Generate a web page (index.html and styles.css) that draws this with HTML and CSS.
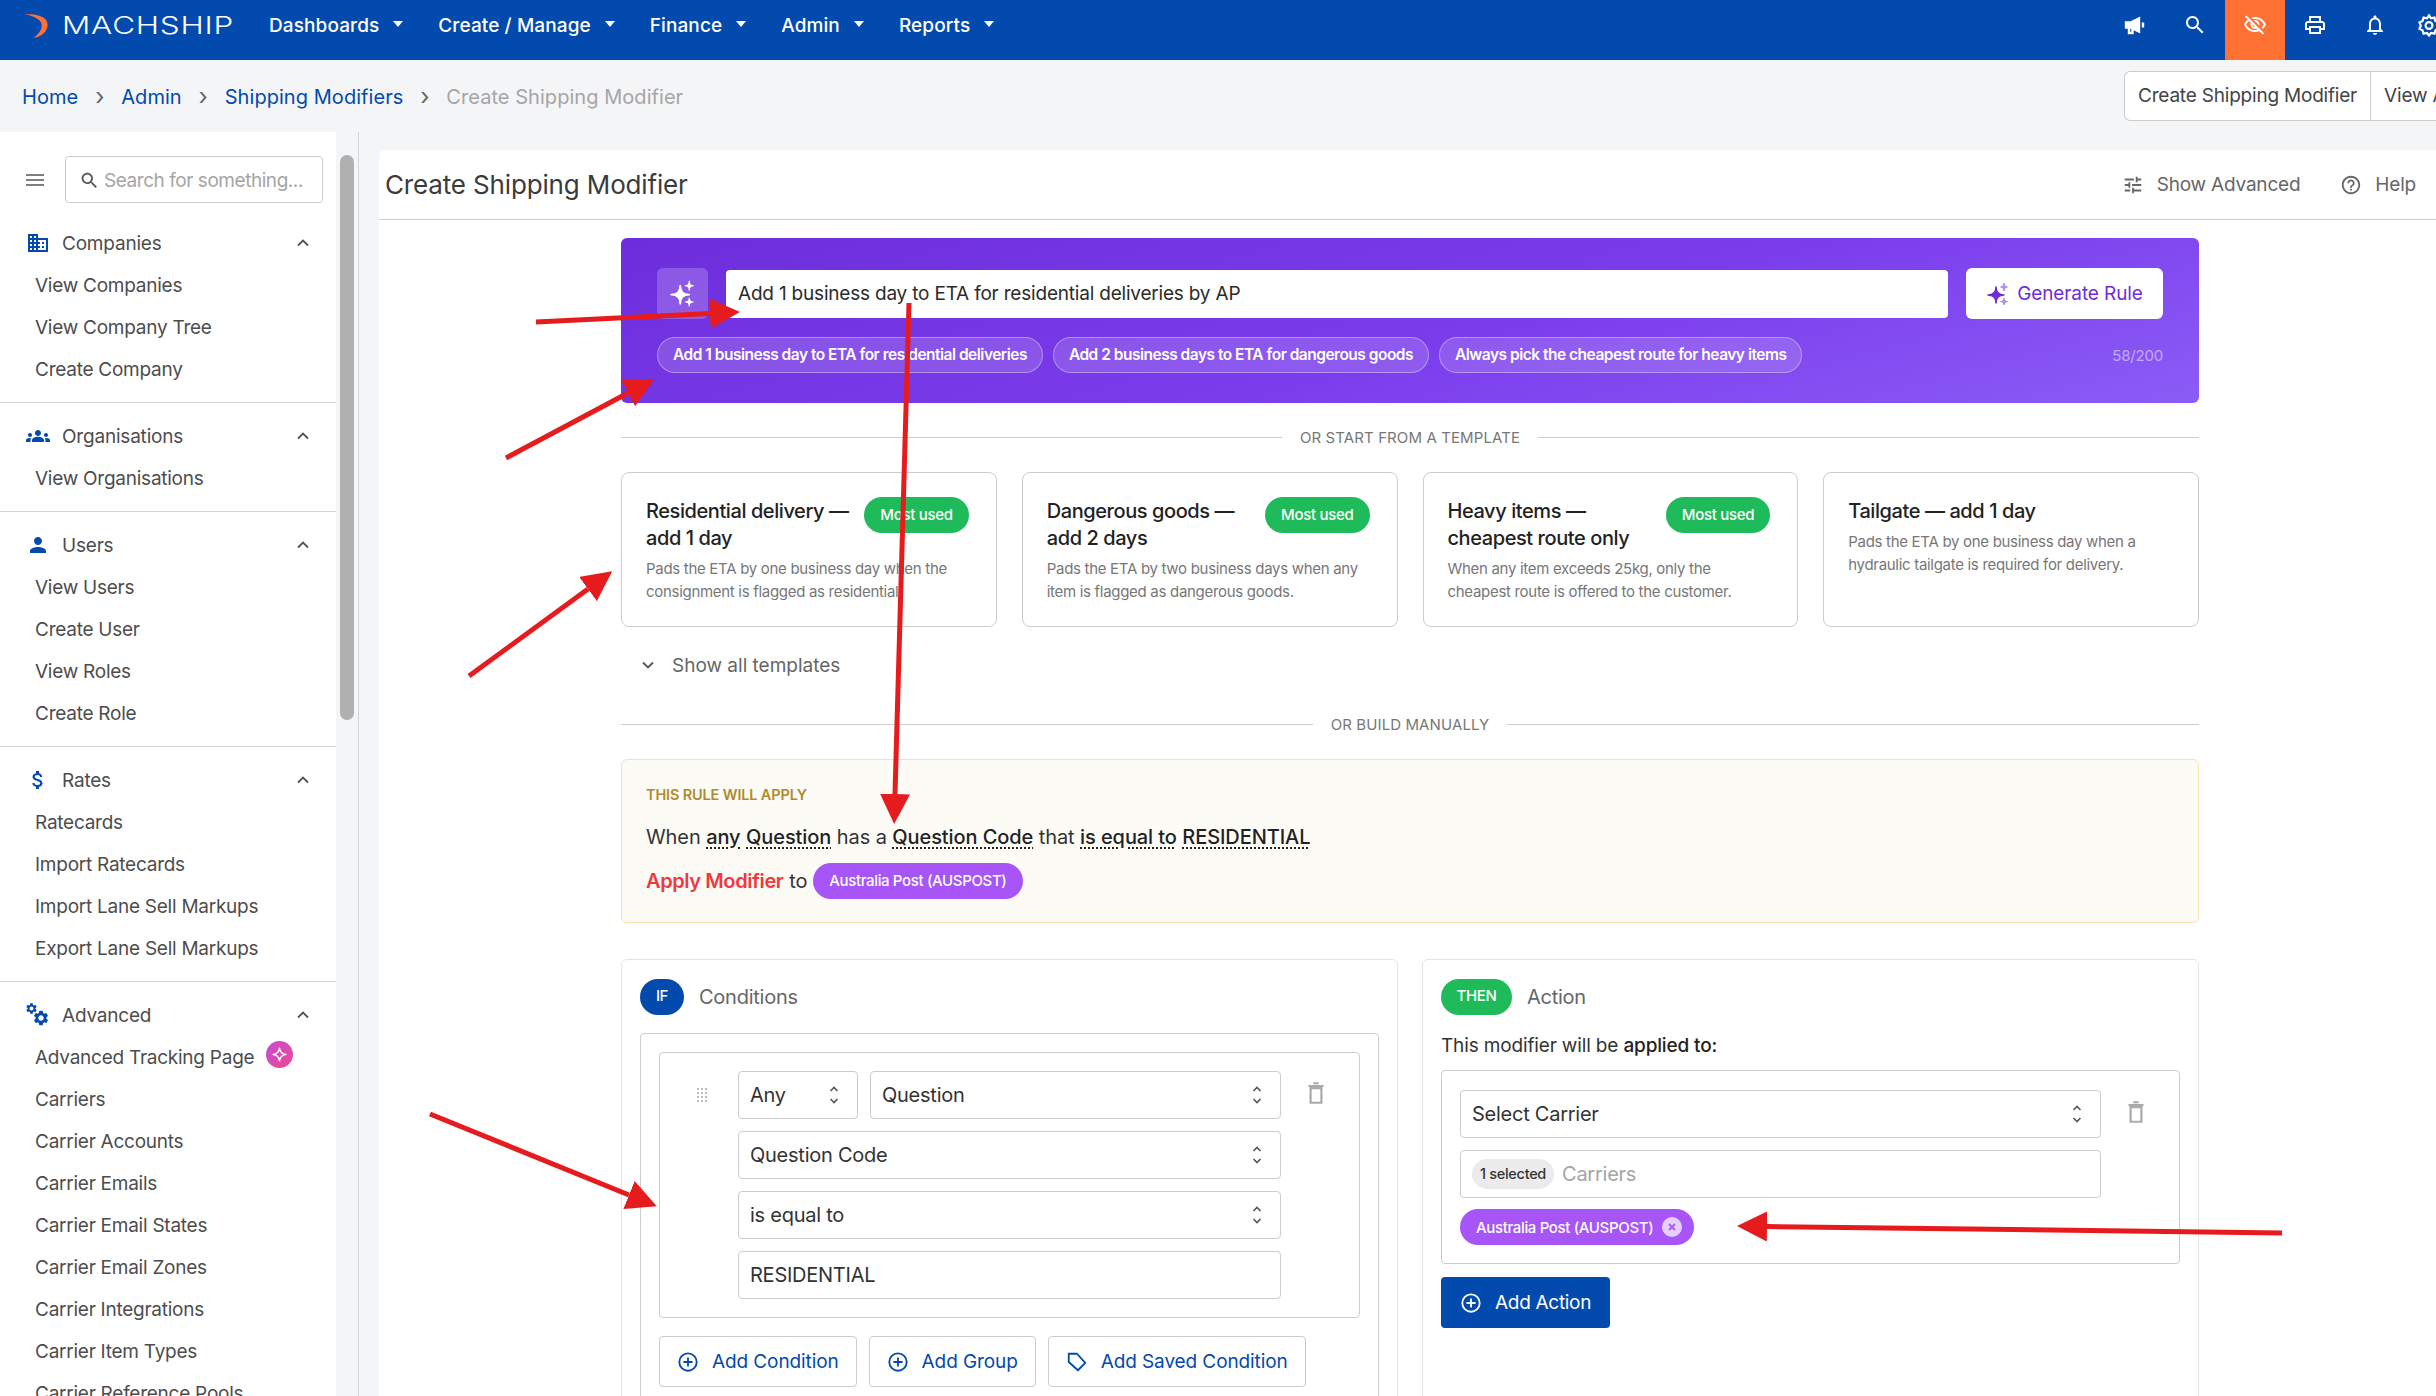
FILE: index.html
```html
<!DOCTYPE html>
<html>
<head>
    <title>Create Shipping Modifier</title>
    <link rel="stylesheet" href="styles.css">
</head>
<body>
    <svg class="sprite" xmlns="http://www.w3.org/2000/svg">
        <symbol id="i-search" viewBox="0 0 24 24"><path d="M15.5 14h-.79l-.28-.27C15.41 12.59 16 11.11 16 9.5 16 5.91 13.09 3 9.5 3S3 5.91 3 9.5 5.91 16 9.5 16c1.61 0 3.09-.59 4.23-1.57l.27.28v.79l5 4.99L20.49 19l-4.99-5zm-6 0C7.01 14 5 11.99 5 9.5S7.01 5 9.5 5 14 7.01 14 9.5 11.99 14 9.5 14z"/></symbol>
        <symbol id="i-gear" viewBox="0 0 24 24"><path d="M19.14 12.94c.04-.3.06-.61.06-.94 0-.32-.02-.64-.07-.94l2.03-1.58c.18-.14.23-.41.12-.61l-1.92-3.32c-.12-.22-.37-.29-.59-.22l-2.39.96c-.5-.38-1.03-.7-1.62-.94l-.36-2.54c-.04-.24-.24-.41-.48-.41h-3.84c-.24 0-.43.17-.47.41l-.36 2.54c-.59.24-1.13.57-1.62.94l-2.39-.96c-.22-.08-.47 0-.59.22L2.74 8.87c-.12.21-.08.47.12.61l2.03 1.58c-.05.3-.09.63-.09.94s.02.64.07.94l-2.03 1.58c-.18.14-.23.41-.12.61l1.92 3.32c.12.22.37.29.59.22l2.39-.96c.5.38 1.03.7 1.62.94l.36 2.54c.05.24.24.41.48.41h3.84c.24 0 .44-.17.47-.41l.36-2.54c.59-.24 1.13-.56 1.62-.94l2.39.96c.22.08.47 0 .59-.22l1.92-3.32c.12-.22.07-.47-.12-.61l-2.01-1.58zM12 15.6c-1.98 0-3.6-1.62-3.6-3.6s1.62-3.6 3.6-3.6 3.6 1.62 3.6 3.6-1.62 3.6-3.6 3.6z"/></symbol>
        <symbol id="i-spark" viewBox="0 0 24 24"><path d="M10 5Q10 13 18 13Q10 13 10 21Q10 13 2 13Q10 13 10 5z" stroke="currentColor" stroke-width="1.6" stroke-linejoin="round"/><path class="spark-small" d="M18 1Q18 5 21.500 5Q18 5 18 9Q18 5 14.500 5Q18 5 18 1z" stroke="currentColor" stroke-width="1" stroke-linejoin="round"/><path class="spark-small" d="M18 16Q18 19.500 21.500 19.500Q18 19.500 18 23Q18 19.500 14.500 19.500Q18 19.500 18 16z" stroke="currentColor" stroke-width="1" stroke-linejoin="round"/></symbol>
        <symbol id="i-updown" viewBox="0 0 12 24"><path d="M2.500 8L6 4.500L9.500 8M2.500 16L6 19.500L9.500 16" fill="none" stroke="currentColor" stroke-width="1.600"/></symbol>
        <symbol id="i-trash" viewBox="0 0 24 24"><path d="M7 7.500h10V21H7zM5 5.500h14M9.500 3h5" fill="none" stroke="currentColor" stroke-width="2"/></symbol>
        <symbol id="i-plus" viewBox="0 0 24 24"><circle cx="12" cy="12" r="9.500" fill="none" stroke="currentColor" stroke-width="2"/><path d="M12 7v10M7 12h10" fill="none" stroke="currentColor" stroke-width="2"/></symbol>
        <symbol id="i-chev" viewBox="0 0 24 24"><path d="M6 15l6-6l6 6" fill="none" stroke="currentColor" stroke-width="2.200"/></symbol>
    </svg>

    <header class="topbar">
        <a class="logo">
            <svg class="logo-mark" viewBox="0 0 32 26"><path d="M0 1C14 1 24 4 23 13C22 20 16 24 9 25C15 20 18 16 17 11C16 6 9 3 0 1z" fill="#ff7033"/></svg>
            <span>MACHSHIP</span>
        </a>
        <nav class="mainnav">
            <a>Dashboards</a>
            <a>Create / Manage</a>
            <a>Finance</a>
            <a>Admin</a>
            <a>Reports</a>
        </nav>
        <div class="top-icons">
            <span class="top-icon"><svg viewBox="0 0 24 24" fill="none" stroke="#fff" stroke-width="2.400"><path d="M3 9.500v5h4.500L16 18.500V5.500L7.500 9.500z" fill="#fff"/><path d="M6 14.500V20h3.500v-5M20 9.500v5"/></svg></span>
            <span class="top-icon"><svg viewBox="0 0 24 24" fill="#fff"><use href="#i-search"/></svg></span>
            <span class="top-icon is-active"><svg viewBox="0 0 24 24" fill="#fff"><path d="M12 6c3.790 0 7.170 2.130 8.820 5.500-.59 1.220-1.420 2.270-2.410 3.120l1.410 1.410c1.390-1.230 2.490-2.770 3.180-4.530C21.270 7.110 17 4 12 4c-1.270 0-2.490.2-3.640.57l1.650 1.650C10.660 6.090 11.320 6 12 6zm-1.070 1.140L13 9.210c.57.25 1.030.71 1.280 1.280l2.070 2.070c.08-.34.14-.7.14-1.070C16.500 9.010 14.480 7 12 7c-.37 0-.72.05-1.070.14zM2.010 3.870l2.680 2.680C3.060 7.830 1.770 9.530 1 11.500 2.730 15.890 7 19 12 19c1.520 0 2.980-.29 4.320-.82l3.420 3.420 1.410-1.410L3.420 2.450 2.010 3.870zm7.500 7.500l2.610 2.610c-.04.01-.08.02-.12.02-1.380 0-2.500-1.120-2.500-2.500 0-.05.01-.08.01-.13zm-3.400-3.400l1.750 1.750c-.23.55-.36 1.150-.36 1.780 0 2.480 2.020 4.500 4.500 4.500.63 0 1.230-.13 1.770-.36l.98.98c-.88.24-1.800.38-2.750.38-3.790 0-7.170-2.130-8.820-5.500.7-1.430 1.720-2.610 2.930-3.530z"/></svg></span>
            <span class="top-icon"><svg viewBox="0 0 24 24" fill="#fff"><path d="M19 8h-1V3H6v5H5c-1.660 0-3 1.340-3 3v6h4v4h12v-4h4v-6c0-1.660-1.340-3-3-3zM8 5h8v3H8V5zm8 12v2H8v-4h8v2zm2-2v-2H6v2H4v-4c0-.55.45-1 1-1h14c.55 0 1 .45 1 1v4h-2z"/></svg></span>
            <span class="top-icon"><svg viewBox="0 0 24 24" fill="#fff"><path d="M12 22c1.100 0 2-.9 2-2h-4c0 1.100.9 2 2 2zm6-6v-5c0-3.070-1.630-5.640-4.500-6.320V4c0-.83-.67-1.500-1.500-1.500s-1.500.67-1.500 1.500v.68C7.640 5.360 6 7.920 6 11v5l-2 2v1h16v-1l-2-2zm-2 1H8v-6c0-2.480 1.510-4.500 4-4.500s4 2.020 4 4.500v6z"/></svg></span>
            <span class="top-icon top-icon-last"><svg viewBox="0 0 24 24" fill="none" stroke="#fff" stroke-width="2.200"><path d="M12 2.500l2 2.800 3.400-.7 1 3.300 3.100 1.600-1.300 3.200 1.300 3-3.100 1.700-1 3.300-3.400-.7-2 2.500-2-2.500-3.400.7-1-3.300-3.100-1.700 1.300-3-1.300-3.200 3.100-1.600 1-3.300 3.400.7z"/><circle cx="12" cy="12.500" r="3.400"/></svg></span>
        </div>
    </header>

    <div class="crumbbar">
        <a class="crumb">Home</a><span class="crumb-sep">›</span>
        <a class="crumb">Admin</a><span class="crumb-sep">›</span>
        <a class="crumb">Shipping Modifiers</a><span class="crumb-sep">›</span>
        <span class="crumb crumb-current">Create Shipping Modifier</span>
        <div class="crumb-tabs">
            <a class="crumb-tab">Create Shipping Modifier</a>
            <a class="crumb-tab">View All Shipping Modifiers</a>
        </div>
    </div>

    <div class="layout">
        <aside class="sidebar">
            <div class="side-search">
                <svg class="hamburger" viewBox="0 0 18 12"><path d="M0 1h18M0 6h18M0 11h18" stroke="#555" stroke-width="1.600"/></svg>
                <div class="search-box">
                    <svg viewBox="0 0 24 24" fill="#555"><use href="#i-search"/></svg>
                    <span>Search for something...</span>
                </div>
            </div>

            <section class="side-group">
                <div class="side-head">
                    <svg class="side-icon" viewBox="0 0 24 24"><path d="M12 7V3H2v18h20V7H12zM6 19H4v-2h2v2zm0-4H4v-2h2v2zm0-4H4V9h2v2zm0-4H4V5h2v2zm4 12H8v-2h2v2zm0-4H8v-2h2v2zm0-4H8V9h2v2zm0-4H8V5h2v2zm10 12h-8v-2h2v-2h-2v-2h2v-2h-2V9h8v10zm-2-8h-2v2h2v-2zm0 4h-2v2h2v-2z"/></svg>
                    <span>Companies</span>
                    <svg class="side-chev" viewBox="0 0 24 24"><use href="#i-chev"/></svg>
                </div>
                <a class="side-link">View Companies</a>
                <a class="side-link">View Company Tree</a>
                <a class="side-link">Create Company</a>
            </section>

            <section class="side-group">
                <div class="side-head">
                    <svg class="side-icon" viewBox="0 0 24 24"><path d="M12 12.750c1.630 0 3.070.39 4.240.9 1.080.48 1.760 1.560 1.760 2.730V18H6v-1.610c0-1.180.68-2.260 1.760-2.730 1.170-.52 2.610-.91 4.240-.91zM4 13c1.100 0 2-.9 2-2s-.9-2-2-2-2 .9-2 2 .9 2 2 2zm1.130 1.100c-.37-.06-.74-.1-1.130-.1-.99 0-1.930.21-2.780.58C.48 14.900 0 15.620 0 16.430V18h4.500v-1.610c0-.83.23-1.610.63-2.290zM20 13c1.100 0 2-.9 2-2s-.9-2-2-2-2 .9-2 2 .9 2 2 2zm4 3.430c0-.81-.48-1.530-1.220-1.850-.85-.37-1.790-.58-2.780-.58-.39 0-.76.04-1.130.1.4.68.63 1.460.63 2.290V18H24v-1.570zM12 6c1.660 0 3 1.340 3 3s-1.340 3-3 3-3-1.340-3-3 1.340-3 3-3z"/></svg>
                    <span>Organisations</span>
                    <svg class="side-chev" viewBox="0 0 24 24"><use href="#i-chev"/></svg>
                </div>
                <a class="side-link">View Organisations</a>
            </section>

            <section class="side-group">
                <div class="side-head">
                    <svg class="side-icon" viewBox="0 0 24 24"><path d="M12 12c2.210 0 4-1.790 4-4s-1.790-4-4-4-4 1.790-4 4 1.790 4 4 4zm0 2c-2.670 0-8 1.340-8 4v2h16v-2c0-2.660-5.330-4-8-4z"/></svg>
                    <span>Users</span>
                    <svg class="side-chev" viewBox="0 0 24 24"><use href="#i-chev"/></svg>
                </div>
                <a class="side-link">View Users</a>
                <a class="side-link">Create User</a>
                <a class="side-link">View Roles</a>
                <a class="side-link">Create Role</a>
            </section>

            <section class="side-group">
                <div class="side-head">
                    <svg class="side-icon" viewBox="0 0 24 24"><path d="M11.800 10.900c-2.270-.59-3-1.200-3-2.150 0-1.090 1.010-1.850 2.700-1.850 1.780 0 2.440.85 2.500 2.100h2.210c-.07-1.720-1.120-3.300-3.210-3.810V3h-3v2.160c-1.940.42-3.500 1.680-3.500 3.610 0 2.310 1.910 3.460 4.700 4.130 2.500.6 3 1.480 3 2.410 0 .69-.49 1.790-2.700 1.790-2.060 0-2.870-.92-2.980-2.100h-2.200c.12 2.190 1.760 3.420 3.680 3.830V21h3v-2.150c1.950-.37 3.500-1.500 3.500-3.550 0-2.840-2.430-3.810-4.700-4.400z"/></svg>
                    <span>Rates</span>
                    <svg class="side-chev" viewBox="0 0 24 24"><use href="#i-chev"/></svg>
                </div>
                <a class="side-link">Ratecards</a>
                <a class="side-link">Import Ratecards</a>
                <a class="side-link">Import Lane Sell Markups</a>
                <a class="side-link">Export Lane Sell Markups</a>
            </section>

            <section class="side-group">
                <div class="side-head">
                    <svg class="side-icon" viewBox="0 0 24 24"><use href="#i-gear" x="-1" y="-1" width="13" height="13"/><use href="#i-gear" x="6" y="6" width="18" height="18"/></svg>
                    <span>Advanced</span>
                    <svg class="side-chev" viewBox="0 0 24 24"><use href="#i-chev"/></svg>
                </div>
                <a class="side-link">Advanced Tracking Page <i class="new-dot"><svg viewBox="0 0 24 24"><path d="M12 3Q13 11 21 12Q13 13 12 21Q11 13 3 12Q11 11 12 3z" fill="none" stroke="#fff" stroke-width="2" stroke-linejoin="round"/></svg></i></a>
                <a class="side-link">Carriers</a>
                <a class="side-link">Carrier Accounts</a>
                <a class="side-link">Carrier Emails</a>
                <a class="side-link">Carrier Email States</a>
                <a class="side-link">Carrier Email Zones</a>
                <a class="side-link">Carrier Integrations</a>
                <a class="side-link">Carrier Item Types</a>
                <a class="side-link">Carrier Reference Pools</a>
            </section>
        </aside>

        <div class="gutter"><div class="scroll-thumb"></div></div>

        <main class="content">
            <div class="page-head">
                <h1>Create Shipping Modifier</h1>
                <div class="page-actions">
                    <a class="page-action"><svg viewBox="0 0 24 24" fill="#666"><path d="M3 17v2h6v-2H3zM3 5v2h10V5H3zm10 16v-2h8v-2h-8v-2h-2v6h2zM7 9v2H3v2h4v2h2V9H7zm14 4v-2H11v2h10zm-6-4h2V7h4V5h-4V3h-2v6z"/></svg>Show Advanced</a>
                    <a class="page-action"><svg viewBox="0 0 24 24" fill="#666"><path d="M11 18h2v-2h-2v2zm1-16C6.480 2 2 6.480 2 12s4.480 10 10 10 10-4.480 10-10S17.520 2 12 2zm0 18c-4.410 0-8-3.590-8-8s3.590-8 8-8 8 3.590 8 8-3.590 8-8 8zm0-14c-2.210 0-4 1.790-4 4h2c0-1.100.9-2 2-2s2 .9 2 2c0 2-3 1.750-3 5h2c0-2.250 3-2.500 3-5 0-2.210-1.790-4-4-4z"/></svg>Help</a>
                </div>
            </div>

            <div class="page-body">
                <section class="ai-panel">
                    <div class="ai-row">
                        <span class="ai-icon"><svg viewBox="0 0 24 24" fill="#fff" color="#fff"><use href="#i-spark"/></svg></span>
                        <div class="ai-input">Add 1 business day to ETA for residential deliveries by AP</div>
                        <button class="ai-generate"><svg viewBox="0 0 24 24" fill="#6d2ddb" color="#6d2ddb"><use href="#i-spark"/></svg>Generate Rule</button>
                    </div>
                    <div class="ai-chips">
                        <span class="ai-chip">Add 1 business day to ETA for residential deliveries</span>
                        <span class="ai-chip">Add 2 business days to ETA for dangerous goods</span>
                        <span class="ai-chip">Always pick the cheapest route for heavy items</span>
                        <span class="ai-count">58/200</span>
                    </div>
                </section>

                <div class="divider divider-template"><span>OR START FROM A TEMPLATE</span></div>

                <div class="templates">
                    <article class="tpl">
                        <div class="tpl-head">
                            <h3>Residential delivery —<br>add 1 day</h3>
                            <span class="tpl-badge">Most used</span>
                        </div>
                        <p>Pads the ETA by one business day when the consignment is flagged as residential.</p>
                    </article>
                    <article class="tpl">
                        <div class="tpl-head">
                            <h3>Dangerous goods —<br>add 2 days</h3>
                            <span class="tpl-badge">Most used</span>
                        </div>
                        <p>Pads the ETA by two business days when any item is flagged as dangerous goods.</p>
                    </article>
                    <article class="tpl">
                        <div class="tpl-head">
                            <h3>Heavy items —<br>cheapest route only</h3>
                            <span class="tpl-badge">Most used</span>
                        </div>
                        <p>When any item exceeds 25kg, only the cheapest route is offered to the customer.</p>
                    </article>
                    <article class="tpl">
                        <div class="tpl-head">
                            <h3>Tailgate — add 1 day</h3>
                        </div>
                        <p>Pads the ETA by one business day when a hydraulic tailgate is required for delivery.</p>
                    </article>
                </div>

                <a class="show-all"><svg viewBox="0 0 24 24"><path d="M6 9l6 6l6-6" fill="none" stroke="#555" stroke-width="2.200"/></svg>Show all templates</a>

                <div class="divider divider-manual"><span>OR BUILD MANUALLY</span></div>

                <section class="rule-box">
                    <div class="rule-label">THIS RULE WILL APPLY</div>
                    <p class="rule-line">When <b>any</b> <b>Question</b> has a <b>Question Code</b> that <b>is equal to</b> <b>RESIDENTIAL</b></p>
                    <p class="rule-line rule-apply"><strong>Apply Modifier</strong> to <span class="pill">Australia Post (AUSPOST)</span></p>
                </section>

                <div class="builder">
                    <section class="panel">
                        <div class="panel-head"><span class="tag tag-if">IF</span>Conditions</div>
                        <div class="outer-box">
                            <div class="cond-box">
                                <span class="drag"></span>
                                <div class="cond-fields">
                                    <div class="cond-row">
                                        <div class="field field-any">Any<svg viewBox="0 0 12 24"><use href="#i-updown"/></svg></div>
                                        <div class="field field-grow">Question<svg viewBox="0 0 12 24"><use href="#i-updown"/></svg></div>
                                    </div>
                                    <div class="field">Question Code<svg viewBox="0 0 12 24"><use href="#i-updown"/></svg></div>
                                    <div class="field">is equal to<svg viewBox="0 0 12 24"><use href="#i-updown"/></svg></div>
                                    <div class="field">RESIDENTIAL</div>
                                </div>
                                <svg class="trash" viewBox="0 0 24 24"><use href="#i-trash"/></svg>
                            </div>
                            <div class="cond-actions">
                                <a class="btn-line"><svg viewBox="0 0 24 24"><use href="#i-plus"/></svg>Add Condition</a>
                                <a class="btn-line"><svg viewBox="0 0 24 24"><use href="#i-plus"/></svg>Add Group</a>
                                <a class="btn-line"><svg viewBox="0 0 24 24"><path d="M3 3h9l9 10l-8 8L3 12z M7 6.500v.1" fill="none" stroke="currentColor" stroke-width="2" stroke-linejoin="round"/></svg>Add Saved Condition</a>
                            </div>
                        </div>
                    </section>

                    <section class="panel">
                        <div class="panel-head"><span class="tag tag-then">THEN</span>Action</div>
                        <p class="applied">This modifier will be <b>applied to:</b></p>
                        <div class="action-box">
                            <div class="action-fields">
                                <div class="field">Select Carrier<svg viewBox="0 0 12 24"><use href="#i-updown"/></svg></div>
                                <div class="field field-multi"><span class="count-chip">1 selected</span><span class="placeholder">Carriers</span></div>
                                <span class="pill pill-x">Australia Post (AUSPOST)<i class="pill-close"><svg viewBox="0 0 12 12"><path d="M3 3l6 6M9 3l-6 6" stroke="#a855f7" stroke-width="1.800"/></svg></i></span>
                            </div>
                            <svg class="trash" viewBox="0 0 24 24"><use href="#i-trash"/></svg>
                        </div>
                        <a class="btn-solid"><svg viewBox="0 0 24 24"><use href="#i-plus"/></svg>Add Action</a>
                    </section>
                </div>
            </div>
        </main>
    </div>

    <svg class="annotations" viewBox="0 0 2436 1396" xmlns="http://www.w3.org/2000/svg">
        <defs>
            <marker id="arrowhead" markerUnits="userSpaceOnUse" markerWidth="30" markerHeight="30" refX="0" refY="15" orient="auto"><path d="M0 0L30 15L0 30z" fill="#e61b1e"/></marker>
        </defs>
        <line x1="536" y1="322" x2="710" y2="313.500" marker-end="url(#arrowhead)"/>
        <line x1="506" y1="458" x2="628" y2="393" marker-end="url(#arrowhead)"/>
        <line x1="469" y1="676" x2="588" y2="589" marker-end="url(#arrowhead)"/>
        <line x1="909" y1="303" x2="895" y2="794" marker-end="url(#arrowhead)"/>
        <line x1="430" y1="1114" x2="629" y2="1195" marker-end="url(#arrowhead)"/>
        <line x1="2282" y1="1233" x2="1767" y2="1226.500" marker-end="url(#arrowhead)"/>
    </svg>
</body>
</html>
```

FILE: styles.css
```css
* {
    box-sizing: border-box;
}
html, body {
    margin: 0;
    height: 1396px;
    overflow: hidden;
}
body {
    position: relative;
    font-family: Inter, "Noto Sans", sans-serif;
    font-size: 19px;
    color: #333;
    background: #f4f5f7;
}
h1, h3, p {
    margin: 0;
    font-weight: inherit;
}
.sprite {
    display: none;
}
.spark-small {
    opacity: var(--small, 1);
}

/* top bar */
.topbar {
    display: flex;
    align-items: center;
    height: 60px;
    background: #024aad;
    color: #fff;
}
.logo {
    display: flex;
    align-items: center;
    width: 269px;
    height: 100%;
    padding: 0 0 9px 24px;
    flex: none;
}
.logo-mark {
    width: 33px;
    height: 26px;
    margin-right: 5px;
}
.logo span {
    font-size: 24px;
    font-weight: 300;
    letter-spacing: .6px;
    transform: scaleX(1.31);
    transform-origin: left center;
}
.mainnav {
    display: flex;
    padding-bottom: 10px;
}
.mainnav a {
    display: flex;
    align-items: center;
    font-size: 19px;
    font-weight: 500;
    letter-spacing: .1px;
    margin-right: 59px;
    position: relative;
}
.mainnav a::after {
    content: "";
    position: absolute;
    right: -24px;
    top: 7px;
    border-left: 5px solid transparent;
    border-right: 5px solid transparent;
    border-top: 6px solid #fff;
}
.top-icons {
    display: flex;
    margin-left: auto;
    height: 100%;
}
.top-icon {
    width: 60px;
    display: flex;
    align-items: center;
    justify-content: center;
    padding-bottom: 10px;
}
.top-icon svg {
    width: 24px;
    height: 24px;
    flex: none;
}
.top-icon.is-active {
    background: #ff7033;
}
.top-icon-last {
    width: 31px;
    justify-content: flex-start;
    padding-left: 12px;
    overflow: hidden;
}

/* breadcrumb */
.crumbbar {
    display: flex;
    align-items: center;
    height: 72px;
    padding: 1px 0 0 22px;
    overflow: hidden;
}
.crumb {
    font-size: 20px;
    color: #024aad;
    letter-spacing: .05px;
}
.crumb-current {
    color: #a5a5a5;
}
.crumb-sep {
    width: 43px;
    text-align: center;
    color: #666;
    font-size: 24px;
    line-height: 20px;
}
.crumb-tabs {
    display: flex;
    flex: none;
    margin: -1px 0 0 auto;
    width: 312px;
    height: 50px;
    background: #fff;
    border: 1px solid #ccc;
    border-right: 0;
    border-radius: 6px 0 0 6px;
    overflow: hidden;
}
.crumb-tab {
    flex: none;
    padding: 0 13px;
    line-height: 48px;
    font-size: 19px;
    letter-spacing: -.2px;
    color: #444;
    white-space: nowrap;
    border-right: 1px solid #ccc;
}

/* layout */
.layout {
    display: flex;
    height: 1264px;
}
.sidebar {
    width: 336px;
    flex: none;
    background: #fff;
    overflow: hidden;
}
.side-search {
    display: flex;
    align-items: center;
    height: 47px;
    margin-top: 24px;
    padding-left: 26px;
    margin-bottom: 19px;
}
.hamburger {
    width: 18px;
    height: 12px;
    margin-right: 21px;
}
.search-box {
    display: flex;
    align-items: center;
    width: 258px;
    height: 47px;
    padding: 2px 0 0 13px;
    border: 1px solid #ccc;
    border-radius: 4px;
    font-size: 19px;
    letter-spacing: -.45px;
    color: #a5a5a5;
    white-space: nowrap;
}
.search-box svg {
    width: 21px;
    height: 21px;
    margin-right: 4px;
    flex: none;
}
.side-group {
    padding-bottom: 12px;
    margin-bottom: 12px;
    border-bottom: 1px solid #d5d5d5;
}
.side-group:last-child {
    border-bottom: 0;
}
.side-head {
    display: flex;
    align-items: center;
    height: 42px;
    padding-left: 26px;
    color: #4d4d4d;
}
.side-head span {
    font-size: 19px;
    letter-spacing: -.2px;
}
.side-icon {
    width: 24px;
    height: 24px;
    fill: #024aad;
    margin-right: 12px;
    flex: none;
}
.side-chev {
    width: 20px;
    height: 20px;
    fill: none;
    color: #555;
    margin-left: auto;
    margin-right: 23px;
}
.side-link {
    display: flex;
    align-items: center;
    height: 42px;
    padding-left: 35px;
    font-size: 19px;
    letter-spacing: -.25px;
    color: #4d4d4d;
    white-space: nowrap;
}
.new-dot {
    display: flex;
    align-items: center;
    justify-content: center;
    width: 27px;
    height: 27px;
    margin: -6px 0 0 12px;
    border-radius: 50%;
    background: linear-gradient(135deg, #c64dd8, #f0468f);
}
.new-dot svg {
    width: 17px;
    height: 17px;
}
.gutter {
    width: 23px;
    flex: none;
    padding: 23px 0 0 4px;
    border-right: 1px solid #d5d5d5;
}
.scroll-thumb {
    width: 14px;
    height: 565px;
    border-radius: 7px;
    background: #b0b0b0;
}

/* page */
.content {
    flex: 1;
    margin: 18px 0 0 20px;
    background: #fff;
    border-radius: 6px 0 0 0;
    min-width: 0;
}
.page-head {
    display: flex;
    align-items: center;
    height: 70px;
    padding: 0 20px 0 6px;
    border-bottom: 1px solid #ccc;
}
.page-head h1 {
    font-size: 26px;
    font-weight: 400;
    letter-spacing: -.15px;
    color: #3b3b3b;
}
.page-actions {
    display: flex;
    margin-left: auto;
    gap: 40px;
}
.page-action {
    display: flex;
    align-items: center;
    font-size: 19px;
    letter-spacing: -.2px;
    color: #666;
}
.page-action svg {
    width: 22px;
    height: 22px;
    margin-right: 13px;
}
.page-body {
    width: 1578px;
    margin-left: 242px;
    padding-top: 18px;
}

/* ai prompt */
.ai-panel {
    height: 165px;
    padding: 30px 36px 0;
    border-radius: 6px;
    color: #fff;
    background: linear-gradient(165deg, #6d2ddb 0%, #7b3dec 55%, #8b5cf6 100%);
}
.ai-row {
    display: flex;
    align-items: center;
}
.ai-icon {
    display: flex;
    align-items: center;
    justify-content: center;
    flex: none;
    width: 51px;
    height: 51px;
    border-radius: 6px;
    background: rgba(255,255,255,.2);
}
.ai-icon svg {
    width: 27px;
    height: 27px;
}
.ai-input {
    flex: 1;
    height: 48px;
    margin: 0 18px 0 18px;
    padding-left: 12px;
    line-height: 48px;
    font-size: 19px;
    letter-spacing: -.2px;
    color: #2b2b2b;
    background: #fff;
    border-radius: 4px;
}
.ai-generate {
    --small: .55;
    display: flex;
    align-items: center;
    justify-content: center;
    flex: none;
    width: 197px;
    height: 51px;
    border: 0;
    border-radius: 6px;
    background: #fff;
    font: inherit;
    font-size: 19px;
    letter-spacing: -.1px;
    color: #6d2ddb;
}
.ai-generate svg {
    width: 24px;
    height: 24px;
    margin-right: 7px;
}
.ai-chips {
    display: flex;
    align-items: center;
    gap: 10px;
    margin-top: 18px;
}
.ai-chip {
    height: 36px;
    padding: 0 15px;
    line-height: 34px;
    font-size: 15.500px;
    font-weight: 600;
    letter-spacing: -.5px;
    white-space: nowrap;
    border: 1px solid rgba(255,255,255,.35);
    border-radius: 18px;
    background: rgba(255,255,255,.15);
}
.ai-count {
    margin-left: auto;
    font-size: 15px;
    letter-spacing: -.2px;
    color: rgba(255,255,255,.5);
}

/* dividers */
.divider {
    display: flex;
    align-items: center;
    gap: 18px;
    font-size: 15px;
    letter-spacing: .1px;
    color: #777;
    white-space: nowrap;
}
.divider::before, .divider::after {
    content: "";
    flex: 1;
    height: 1px;
    background: #ccc;
}
.divider-template {
    height: 20px;
    margin: 24px 0 25px;
}
.divider-manual {
    height: 20px;
    margin: 37px 0 25px;
}

/* templates */
.templates {
    display: grid;
    grid-template-columns: repeat(4, 1fr);
    gap: 25px;
}
.tpl {
    height: 155px;
    padding: 25px 24px 0;
    border: 1px solid #ccc;
    border-radius: 8px;
}
.tpl-head {
    display: flex;
    justify-content: space-between;
    align-items: flex-start;
    margin-bottom: 5px;
}
.tpl-badge {
    margin-top: -1px;
}
.tpl h3 {
    font-size: 20px;
    font-weight: 500;
    line-height: 27px;
    letter-spacing: -.42px;
    color: #222;
}
.tpl p {
    font-size: 15px;
    line-height: 23px;
    letter-spacing: -.3px;
    color: #777;
}
.tpl-badge {
    flex: none;
    height: 36px;
    margin-right: 3px;
    padding: 0 16px;
    line-height: 36px;
    font-size: 15px;
    font-weight: 500;
    letter-spacing: -.3px;
    color: #fff;
    border-radius: 18px;
    background: #1fbb5a;
}
.show-all {
    display: flex;
    align-items: center;
    height: 24px;
    margin: 26px 0 0 17px;
    font-size: 19px;
    letter-spacing: 0;
    color: #666;
}
.show-all svg {
    width: 20px;
    height: 20px;
    margin-right: 14px;
}

/* rule summary */
.rule-box {
    height: 164px;
    padding: 26px 24px 0;
    border: 1px solid #f8e2ad;
    border-radius: 6px;
    background: #fdfbf6;
}
.rule-label {
    font-size: 14.500px;
    font-weight: 600;
    letter-spacing: -.15px;
    color: #b08a2e;
}
.rule-line {
    margin-top: 20px;
    font-size: 20px;
    line-height: 28px;
    letter-spacing: -.09px;
    color: #333;
}
.rule-line b {
    font-weight: 500;
    color: #222;
    text-decoration: underline dotted #222;
    text-underline-offset: 3px;
}
.rule-apply {
    display: flex;
    align-items: center;
    gap: 6px;
    margin-top: 11px;
    height: 37px;
    letter-spacing: -.25px;
}
.rule-apply strong {
    font-weight: 600;
    letter-spacing: -.4px;
    color: #f0383e;
}
.pill {
    display: inline-flex;
    align-items: center;
    height: 36px;
    padding: 0 16px;
    font-size: 15px;
    font-weight: 500;
    letter-spacing: -.35px;
    color: #fff;
    border-radius: 18px;
    background: #a855f7;
}

/* builder */
.builder {
    display: flex;
    gap: 24px;
    margin-top: 36px;
}
.panel {
    flex: none;
    width: 777px;
    height: 500px;
    padding: 19px 18px 0;
    border: 1px solid #e4e4e4;
    border-radius: 6px;
}
.panel-head {
    display: flex;
    align-items: center;
    height: 36px;
    font-size: 20px;
    letter-spacing: -.25px;
    color: #666;
}
.tag {
    height: 36px;
    margin-right: 15px;
    line-height: 34px;
    text-align: center;
    font-size: 15px;
    font-weight: 500;
    letter-spacing: -.4px;
    color: #fff;
    border-radius: 18px;
}
.tag-if {
    width: 44px;
    background: #024aad;
}
.tag-then {
    width: 71px;
    background: #1fbb5a;
}
.outer-box {
    height: 400px;
    margin-top: 18px;
    padding: 18px 18px 0;
    border: 1px solid #ccc;
    border-radius: 4px;
}
.cond-box {
    display: flex;
    align-items: flex-start;
    height: 266px;
    padding: 18px 0 0 36px;
    border: 1px solid #ccc;
    border-radius: 4px;
}
.drag {
    flex: none;
    width: 12px;
    height: 16px;
    margin: 16px 30px 0 0;
    background-image: radial-gradient(circle, #bbb 1.100px, transparent 1.400px);
    background-size: 4px 4px;
}
.cond-fields {
    display: flex;
    flex-direction: column;
    gap: 12px;
    width: 543px;
    flex: none;
}
.cond-row {
    display: flex;
    gap: 12px;
}
.field {
    display: flex;
    align-items: center;
    justify-content: space-between;
    height: 48px;
    padding: 0 17px 0 11px;
    font-size: 20px;
    letter-spacing: -.25px;
    color: #333;
    background: #fff;
    border: 1px solid #ccc;
    border-radius: 4px;
}
.field svg {
    width: 12px;
    height: 24px;
    color: #555;
    flex: none;
}
.field-any {
    width: 120px;
    flex: none;
}
.field-grow {
    flex: 1;
}
.trash {
    flex: none;
    width: 26px;
    height: 26px;
    margin: 9px 0 0 22px;
    color: #aaa;
}
.cond-actions {
    display: flex;
    gap: 12px;
    margin-top: 18px;
}
.btn-line {
    display: flex;
    align-items: center;
    height: 51px;
    padding: 0 17px;
    font-size: 19px;
    letter-spacing: -.1px;
    color: #024aad;
    border: 1px solid #ccc;
    border-radius: 4px;
}
.btn-line svg {
    width: 22px;
    height: 22px;
    margin-right: 13px;
}
.applied {
    margin: 17px 0 0;
    font-size: 19px;
    line-height: 28px;
    letter-spacing: -.15px;
    color: #333;
}
.applied b {
    font-weight: 500;
    color: #222;
}
.action-box {
    display: flex;
    align-items: flex-start;
    width: 739px;
    height: 194px;
    margin-top: 10px;
    padding: 19px 0 0 18px;
    border: 1px solid #ccc;
    border-radius: 4px;
}
.action-fields {
    display: flex;
    flex-direction: column;
    align-items: flex-start;
    gap: 12px;
    width: 641px;
    flex: none;
}
.action-fields .field {
    width: 100%;
}
.action-fields .pill {
    margin-top: -1px;
}
.field-multi {
    justify-content: flex-start;
    gap: 8px;
    padding-left: 11px;
}
.count-chip {
    height: 30px;
    padding: 0 8px;
    line-height: 30px;
    font-size: 14.500px;
    font-weight: 500;
    letter-spacing: -.3px;
    border-radius: 15px;
    background: #ebebeb;
    color: #333;
}
.placeholder {
    color: #a5a5a5;
}
.pill-x {
    padding: 0 12px 0 16px;
}
.pill-close {
    display: flex;
    align-items: center;
    justify-content: center;
    width: 20px;
    height: 20px;
    margin-left: 9px;
    border-radius: 50%;
    background: #e6d0fb;
}
.pill-close svg {
    width: 12px;
    height: 12px;
}
.btn-solid {
    display: inline-flex;
    align-items: center;
    height: 51px;
    margin-top: 13px;
    padding: 0 19px;
    font-size: 19px;
    letter-spacing: -.3px;
    color: #fff;
    background: #024aad;
    border-radius: 4px;
}
.btn-solid svg {
    width: 22px;
    height: 22px;
    margin-right: 13px;
}

/* red review arrows drawn on top of the screenshot */
.annotations {
    position: absolute;
    top: 0;
    left: 0;
    width: 2436px;
    height: 1396px;
    pointer-events: none;
}
.annotations line {
    stroke: #e61b1e;
    stroke-width: 5;
}
```
